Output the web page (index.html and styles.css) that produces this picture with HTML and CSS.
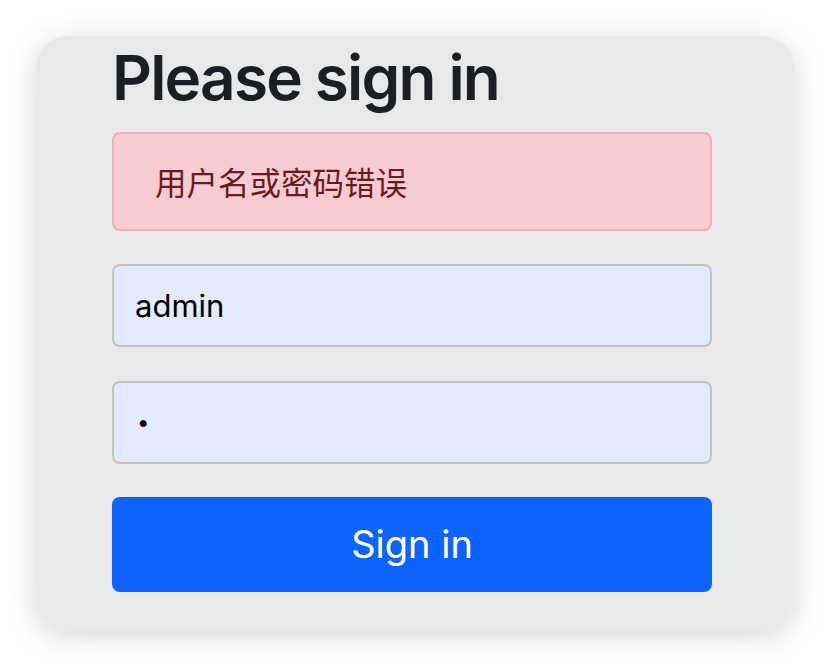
FILE: index.html
```html
<!DOCTYPE html>
<html lang="zh-CN">
<head>
    <meta charset="UTF-8">
    <meta name="viewport" content="width=device-width, initial-scale=1.0">
    <title>Please sign in</title>
    <link rel="stylesheet" href="styles.css">
</head>
<body>
    <div class="card">
        <form class="form-signin" method="POST">
            <h1>Please sign in</h1>

            <div class="alert">用户名或密码错误</div>

            <input type="text" class="field" name="username" value="admin">
            <input type="password" class="field field-password" name="password" value="a">

            <button type="submit">Sign in</button>
        </form>
    </div>
</body>
</html>
```

FILE: styles.css
```css
* {
    margin: 0;
    padding: 0;
    box-sizing: border-box;
}

body {
    font-family: Inter, "Noto Sans CJK SC", sans-serif;
    background: #fff;
    color: #1b1f23;
    padding: 36px;
}

.card {
    width: 758px;
    height: 594px;
    padding: 4px 0 0 76px;
    background: #e9e9e9;
    border-radius: 32px;
    box-shadow: 0 6px 30px rgba(0, 0, 0, 0.16);
}

.form-signin {
    width: 600px;
    display: flex;
    flex-direction: column;
}

h1 {
    font-size: 62px;
    font-weight: 600;
    line-height: 1.24;
    letter-spacing: -1.8px;
    margin-bottom: 15px;
}

.alert {
    height: 99px;
    display: flex;
    align-items: center;
    padding-left: 41px;
    background: #f6cbd1;
    border: 2px solid #f1aeb5;
    border-radius: 8px;
    color: #6a1a21;
    font-family: "Noto Sans CJK SC", sans-serif;
    font-size: 31.5px;
    margin-bottom: 33px;
}

.field {
    height: 83px;
    padding: 0 21px;
    border: 2px solid #c2c2c2;
    border-radius: 8px;
    background: #e2eafc;
    color: #000;
    font-family: Inter, sans-serif;
    font-size: 31px;
    outline: none;
    margin-bottom: 34px;
}

.field-password {
    font-size: 22px;
    padding-left: 23px;
    margin-bottom: 33px;
}

button {
    height: 95px;
    background: #0d64fd;
    border: none;
    border-radius: 8px;
    color: #fff;
    font-family: Inter, sans-serif;
    font-size: 38px;
    cursor: pointer;
}
```
